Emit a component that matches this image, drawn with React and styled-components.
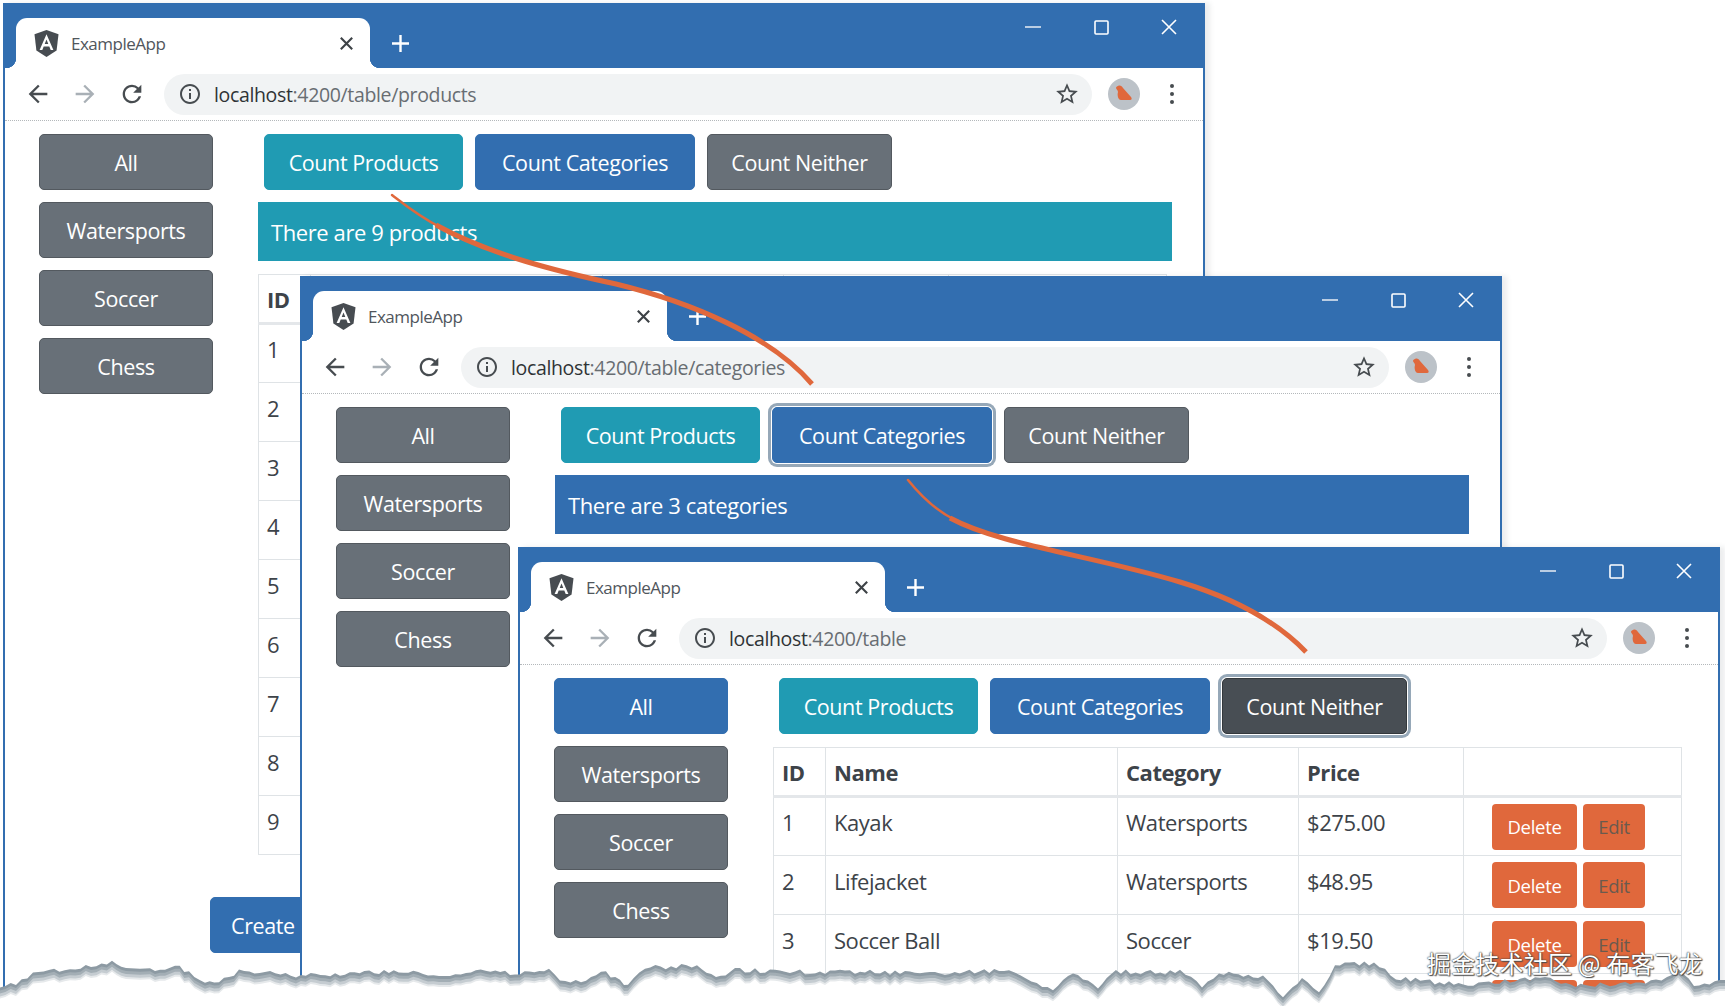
import React from "react"
import styled, { createGlobalStyle } from "styled-components"

const BLUE = "#326eb0"
const TEAL = "#209bb3"
const GRAY = "#687078"
const DARK = "#484e54"
const ORANGE = "#e0683c"

const GlobalStyle = createGlobalStyle`
  html, body {
    margin: 0;
    padding: 0;
    background: #fff;
  }
  * {
    box-sizing: border-box;
  }
`

const Canvas = styled.div`
  position: relative;
  width: 1725px;
  height: 1006px;
  overflow: hidden;
  background: #fff;
  font-family: "Open Sans", "Noto Sans", sans-serif;
  color: #3d4349;
`

const Window = styled.section`
  position: absolute;
  left: ${p => p.$x}px;
  top: ${p => p.$y}px;
  width: 1202px;
  height: ${p => 1006 - p.$y}px;
  overflow: hidden;
  background: #fff;
  border-left: 2px solid ${BLUE};
  border-right: 2px solid ${BLUE};
  box-shadow: 5px 0 5px rgba(70, 80, 90, 0.1);
`

const TitleBar = styled.header`
  display: flex;
  align-items: flex-end;
  height: 65px;
  background: ${BLUE};
`

const Tab = styled.div`
  position: relative;
  display: flex;
  align-items: center;
  width: 354px;
  height: 50px;
  margin-left: 11px;
  padding: 0 17px 0 18px;
  background: #fff;
  border-radius: 11px 11px 0 0;
  &::before,
  &::after {
    content: "";
    position: absolute;
    bottom: 0;
    width: 10px;
    height: 10px;
  }
  &::before {
    left: -10px;
    background: radial-gradient(circle at 0 0, ${BLUE} 10px, #fff 10.5px);
  }
  &::after {
    right: -10px;
    background: radial-gradient(circle at 100% 0, ${BLUE} 10px, #fff 10.5px);
  }
`

const TabTitle = styled.span`
  flex: 1;
  margin-left: 12px;
  font-size: 17px;
  letter-spacing: -0.5px;
  color: #50565c;
`

const NewTab = styled.div`
  display: flex;
  align-items: center;
  height: 50px;
  margin-left: 21px;
`

const WindowControls = styled.div`
  display: flex;
  align-self: flex-start;
  margin-left: auto;
`

const WindowControl = styled.div`
  display: flex;
  align-items: center;
  justify-content: center;
  width: 68px;
  height: 48px;
`

const Toolbar = styled.nav`
  display: flex;
  align-items: center;
  height: 53px;
  padding: 0 23px 0 9px;
  border-bottom: 1px dotted #b4b8bb;
`

const NavButton = styled.div`
  display: flex;
  align-items: center;
  justify-content: center;
  width: 47px;
`

const AddressBar = styled.div`
  display: flex;
  flex: 1;
  align-items: center;
  height: 41px;
  margin-left: 9px;
  padding: 0 12px 0 14px;
  border-radius: 21px;
  background: #f1f3f4;
`

const Url = styled.div`
  flex: 1;
  margin-left: 12px;
  font-size: 19.5px;
  letter-spacing: -0.35px;
  color: #686d72;
  b {
    font-weight: 400;
    color: #2f3336;
  }
`

const Avatar = styled.div`
  display: flex;
  align-items: center;
  justify-content: center;
  width: 32px;
  height: 32px;
  margin-left: 16px;
  border-radius: 50%;
  background: #bcc2c8;
`

const MenuDots = styled.div`
  display: flex;
  flex-direction: column;
  align-items: center;
  gap: 4px;
  width: 16px;
  margin-left: 24px;
  i {
    width: 4px;
    height: 4px;
    border-radius: 50%;
    background: #474c50;
  }
`

const Page = styled.div`
  display: flex;
  gap: 45px;
  padding: 13px 33px 0 34px;
`

const Sidebar = styled.aside`
  display: flex;
  flex: none;
  flex-direction: column;
  gap: 12px;
  width: 174px;
`

const Button = styled.button`
  display: block;
  height: 56px;
  padding: 0 20px;
  border: 1px solid ${p => p.$border || p.$bg};
  border-radius: 5px;
  background: ${p => p.$bg};
  color: #fff;
  font-family: inherit;
  font-size: 21.5px;
  letter-spacing: -0.4px;
  white-space: nowrap;
  box-shadow: ${p => (p.$focus ? "0 0 0 1px #fff, 0 0 0 4px #96a8b8" : "none")};
`

const CategoryButton = styled(Button)`
  width: 100%;
`

const Main = styled.main`
  flex: 1;
  min-width: 0;
`

const CountRow = styled.div`
  display: flex;
  gap: 12px;
  padding-left: 6px;
`

const CountButton = styled(Button)`
  width: ${p => p.$width}px;
  padding: 0;
`

const Alert = styled.div`
  display: flex;
  align-items: center;
  height: 59px;
  margin-top: 12px;
  margin-right: -2px;
  padding-left: 13px;
  background: ${p => p.$bg};
  color: #fff;
  font-size: 22px;
  letter-spacing: -0.4px;
`

const Table = styled.table`
  width: 908px;
  margin-top: 13px;
  border-collapse: collapse;
  table-layout: fixed;
  font-size: 22px;
  letter-spacing: -0.45px;
  col:nth-child(1) { width: 52px; }
  col:nth-child(2) { width: 292px; }
  col:nth-child(3) { width: 181px; }
  col:nth-child(4) { width: 165px; }
  col:nth-child(5) { width: 218px; }
`

const HeadCell = styled.th`
  height: 49px;
  padding: 0 8px;
  border: 1px solid #dfe3e6;
  border-bottom: 3px solid #e4e7ea;
  text-align: left;
  font-weight: 700;
`

const Cell = styled.td`
  height: 59px;
  padding: 0 8px 9px;
  border: 1px solid #dfe3e6;
  white-space: nowrap;
`

const ActionCell = styled.td`
  height: 59px;
  padding: 0 0 0 28px;
  border: 1px solid #dfe3e6;
`

const Actions = styled.div`
  display: flex;
  gap: 6px;
`

const RowButton = styled.button`
  width: ${p => p.$width}px;
  height: 46px;
  padding: 0;
  border: none;
  border-radius: 4px;
  background: ${ORANGE};
  color: ${p => (p.$muted ? "#6a5a4e" : "#fff")};
  font-family: inherit;
  font-size: 18.5px;
  letter-spacing: -0.3px;
`

const Footer = styled.div`
  padding: 42px 0 0 205px;
`

const Overlay = styled.svg`
  position: absolute;
  left: 0;
  top: 0;
  pointer-events: none;
`

const Watermark = styled.div`
  position: absolute;
  right: 22px;
  bottom: 26px;
  color: #fff;
  font-family: "Noto Sans CJK SC", "Noto Sans", sans-serif;
  font-size: 24px;
  letter-spacing: 0.2px;
  text-shadow: 0 0 1px #333, 0 0 2px #444, 1px 1px 1px #555;
`

const products = [
  [1, "Kayak", "Watersports", "$275.00"],
  [2, "Lifejacket", "Watersports", "$48.95"],
  [3, "Soccer Ball", "Soccer", "$19.50"],
  [4, "Corner Flags", "Soccer", "$34.95"],
  [5, "Stadium", "Soccer", "$79500.00"],
  [6, "Thinking Cap", "Chess", "$16.00"],
  [7, "Unsteady Chair", "Chess", "$29.95"],
  [8, "Human Chess Board", "Chess", "$75.00"],
  [9, "Bling Bling King", "Chess", "$1200.00"],
]

const categories = ["All", "Watersports", "Soccer", "Chess"]

const MaterialIcon = ({ d, size = 28, color = "#474c50" }) => (
  <svg width={size} height={size} viewBox="0 0 24 24" fill={color}>
    <path d={d} />
  </svg>
)

const ICONS = {
  back: "M20 11H7.83l5.59-5.59L12 4l-8 8 8 8 1.41-1.41L7.83 13H20v-2z",
  forward: "M4 11h12.17l-5.59-5.59L12 4l8 8-8 8-1.41-1.41L16.17 13H4v-2z",
  reload:
    "M17.65 6.35A7.958 7.958 0 0 0 12 4c-4.42 0-7.99 3.58-7.99 8s3.57 8 7.99 8c3.73 0 6.84-2.55 7.73-6h-2.08A5.99 5.99 0 0 1 12 18c-3.31 0-6-2.69-6-6s2.69-6 6-6c1.66 0 3.14.69 4.22 1.78L13 11h7V4l-2.35 2.35z",
  info: "M11 7h2v2h-2zm0 4h2v6h-2zm1-9C6.48 2 2 6.48 2 12s4.48 10 10 10 10-4.48 10-10S17.52 2 12 2zm0 18c-4.41 0-8-3.59-8-8s3.59-8 8-8 8 3.59 8 8-3.59 8-8 8z",
  star: "M22 9.24l-7.19-.62L12 2 9.19 8.63 2 9.24l5.46 4.73L5.82 21 12 17.27 18.18 21l-1.63-7.03L22 9.24zM12 15.4l-3.76 2.27 1-4.28-3.32-2.88 4.38-.38L12 6.1l1.71 4.04 4.38.38-3.32 2.88 1 4.28L12 15.4z",
}

const AngularLogo = () => (
  <svg width="25" height="27" viewBox="0 0 25 27">
    <path d="M12.5 0 24.5 4.2 22.6 20.6 12.5 27 2.4 20.6 0.5 4.2Z" fill="#474c51" />
    <path
      d="M12.5 4.2 5.6 20h2.7l1.4-3.6h5.6l1.4 3.6h2.7ZM10.7 14l1.8-4.6 1.8 4.6Z"
      fill="#fff"
    />
  </svg>
)

const BirdIcon = () => (
  <svg width="22" height="22" viewBox="0 0 22 22">
    <path
      d="M5 3c2-1 4 0 5 2l8 9c1 1 1 3-1 3H8C5 17 4 12 5 9 5 7 3 6 3 5s1-2 2-2z"
      fill={ORANGE}
    />
  </svg>
)

const CloseIcon = ({ size, color, width = 1.6 }) => (
  <svg width={size} height={size} viewBox="0 0 16 16">
    <path d="M1 1 15 15M15 1 1 15" stroke={color} strokeWidth={width} fill="none" />
  </svg>
)

const BrowserChrome = ({ url }) => {
  const [host, ...rest] = url.split(":")
  return (
    <>
      <TitleBar>
        <Tab>
          <AngularLogo />
          <TabTitle>ExampleApp</TabTitle>
          <CloseIcon size={13} color="#3d4246" width={2.6} />
          <></>
        </Tab>
        <NewTab>
          <svg width="19" height="19" viewBox="0 0 19 19">
            <path d="M9.5 1v17M1 9.5h17" stroke="#fff" strokeWidth="2.4" />
          </svg>
        </NewTab>
        <WindowControls>
          <WindowControl>
            <svg width="16" height="4" viewBox="0 0 16 4">
              <path d="M0 2h16" stroke="#e8eef5" strokeWidth="1.5" />
            </svg>
          </WindowControl>
          <WindowControl>
            <svg width="15" height="15" viewBox="0 0 15 15">
              <rect x="1" y="1" width="13" height="13" rx="1" fill="none" stroke="#fff" strokeWidth="1.6" />
            </svg>
          </WindowControl>
          <WindowControl>
            <CloseIcon size={16} color="#fff" />
          </WindowControl>
        </WindowControls>
      </TitleBar>
      <Toolbar>
        <NavButton>
          <MaterialIcon d={ICONS.back} />
        </NavButton>
        <NavButton>
          <MaterialIcon d={ICONS.forward} color="#a9b0b6" />
        </NavButton>
        <NavButton>
          <MaterialIcon d={ICONS.reload} />
        </NavButton>
        <AddressBar>
          <MaterialIcon d={ICONS.info} size={24} />
          <Url>
            <b>{host}</b>:{rest.join(":")}
          </Url>
          <MaterialIcon d={ICONS.star} size={26} />
        </AddressBar>
        <Avatar>
          <BirdIcon />
        </Avatar>
        <MenuDots>
          <i />
          <i />
          <i />
        </MenuDots>
      </Toolbar>
    </>
  )
}

const ProductTable = ({ rows }) => (
  <Table>
    <colgroup>
      <col />
      <col />
      <col />
      <col />
      <col />
    </colgroup>
    <thead>
      <tr>
        <HeadCell>ID</HeadCell>
        <HeadCell>Name</HeadCell>
        <HeadCell>Category</HeadCell>
        <HeadCell>Price</HeadCell>
        <HeadCell />
      </tr>
    </thead>
    <tbody>
      {rows.map(([id, name, category, price]) => (
        <tr key={id}>
          <Cell>{id}</Cell>
          <Cell>{name}</Cell>
          <Cell>{category}</Cell>
          <Cell>{price}</Cell>
          <ActionCell>
            <Actions>
              <RowButton $width={85}>Delete</RowButton>
              <RowButton $width={62} $muted>
                Edit
              </RowButton>
            </Actions>
          </ActionCell>
        </tr>
      ))}
    </tbody>
  </Table>
)

const BrowserWindow = ({ x, y, url, focus, activeCategory, alert }) => (
  <Window $x={x} $y={y}>
    <BrowserChrome url={url} />
    <Page>
      <Sidebar>
        {categories.map(c => (
          <CategoryButton
            key={c}
            $bg={c === activeCategory ? BLUE : GRAY}
            $border={c === activeCategory ? BLUE : "#53595f"}
          >
            {c}
          </CategoryButton>
        ))}
      </Sidebar>
      <Main>
        <CountRow>
          <CountButton $width={199} $bg={TEAL}>
            Count Products
          </CountButton>
          <CountButton $width={220} $bg={BLUE} $focus={focus === "categories"}>
            Count Categories
          </CountButton>
          <CountButton
            $width={185}
            $bg={focus === "neither" ? DARK : GRAY}
            $border={focus === "neither" ? "#33383c" : "#53595f"}
            $focus={focus === "neither"}
          >
            Count Neither
          </CountButton>
        </CountRow>
        {alert && <Alert $bg={alert.bg}>{alert.text}</Alert>}
        <ProductTable rows={products} />
      </Main>
    </Page>
    <Footer>
      <Button $bg={BLUE}>Create New Product</Button>
    </Footer>
  </Window>
)

// the curved arrows taper from a thin start to the full stroke width
const CurvedArrow = ({ d, thin, head }) => (
  <>
    <path d={thin} fill="none" stroke={ORANGE} strokeWidth="2.5" strokeLinecap="round" />
    <path d={d} fill="none" stroke={ORANGE} strokeWidth="5" />
    <polygon points={head} fill={ORANGE} />
  </>
)

// top edge of the torn paper, read off the reference
const TEAR = [
  [0, 990], [16, 983], [33, 973], [70, 970], [112, 963], [140, 969], [165, 970], [175, 965], [189, 973],
  [205, 982], [219, 983], [239, 970], [296, 975], [340, 974], [384, 972], [428, 973], [450, 975],
  [466, 971], [510, 973], [549, 970], [560, 978], [581, 983], [606, 972], [620, 982], [628, 983],
  [645, 968], [697, 965], [716, 977], [735, 970], [800, 972], [860, 972], [935, 973], [1009, 970],
  [1026, 978], [1053, 990], [1073, 973], [1098, 988], [1111, 972], [1180, 972], [1202, 985],
  [1219, 973], [1263, 977], [1283, 997], [1302, 977], [1319, 992], [1335, 965], [1374, 963],
  [1396, 978], [1430, 982], [1468, 985], [1510, 981], [1545, 977], [1561, 985], [1610, 984],
  [1656, 982], [1678, 970], [1694, 985], [1725, 980],
]

const jagged = () => {
  const out = []
  TEAR.forEach(([x, y], i) => {
    const next = TEAR[i + 1]
    if (!next) {
      out.push([x, y])
      return
    }
    const steps = Math.max(1, Math.round((next[0] - x) / 5))
    for (let s = 0; s < steps; s++) {
      const t = s / steps
      const n = Math.sin(x * 12.9898 + s * 78.233) * 43758.5453
      out.push([x + (next[0] - x) * t, y + (next[1] - y) * t + (n - Math.floor(n)) * 5 - 2.5])
    }
  })
  return out
}

const TEAR_POINTS = jagged()

const tearPolygon = offset =>
  TEAR_POINTS.map(([x, y]) => `${x.toFixed(1)},${(y + offset).toFixed(1)}`).join(" ") +
  " 1725,1006 0,1006"

const TornEdge = () => (
  <>
    <polygon points={tearPolygon(0)} fill="#8d9aa3" />
    <polygon points={tearPolygon(3)} fill="#a3aeb5" />
    <polygon points={tearPolygon(6)} fill="#c5ccd1" />
    <polygon points={tearPolygon(9)} fill="#e6e9eb" />
    <polygon points={tearPolygon(11)} fill="#fff" />
  </>
)

export default function App() {
  return (
    <Canvas>
      <GlobalStyle />
      <BrowserWindow
        x={3}
        y={3}
        url="localhost:4200/table/products"
        alert={{ bg: TEAL, text: "There are 9 products" }}
      />
      <BrowserWindow
        x={300}
        y={276}
        url="localhost:4200/table/categories"
        focus="categories"
        alert={{ bg: BLUE, text: "There are 3 categories" }}
      />
      <BrowserWindow
        x={518}
        y={547}
        url="localhost:4200/table"
        focus="neither"
        activeCategory="All"
      />
      <Overlay width="1725" height="1006" viewBox="0 0 1725 1006">
        <CurvedArrow
          thin="M392 195C405 205 420 217 440 227"
          d="M436 225C490 255 560 272 616 284C690 302 770 335 812 384"
          head="M824 395 797 378 822 361"
        />
        <CurvedArrow
          thin="M908 480C920 495 935 510 955 520"
          d="M950 518C1000 545 1090 555 1180 582C1240 600 1280 625 1306 652"
          head="M1317 664 1292 650 1313 634"
        />
        <TornEdge />
      </Overlay>
      <Watermark>掘金技术社区 @ 布客飞龙</Watermark>
    </Canvas>
  )
}
